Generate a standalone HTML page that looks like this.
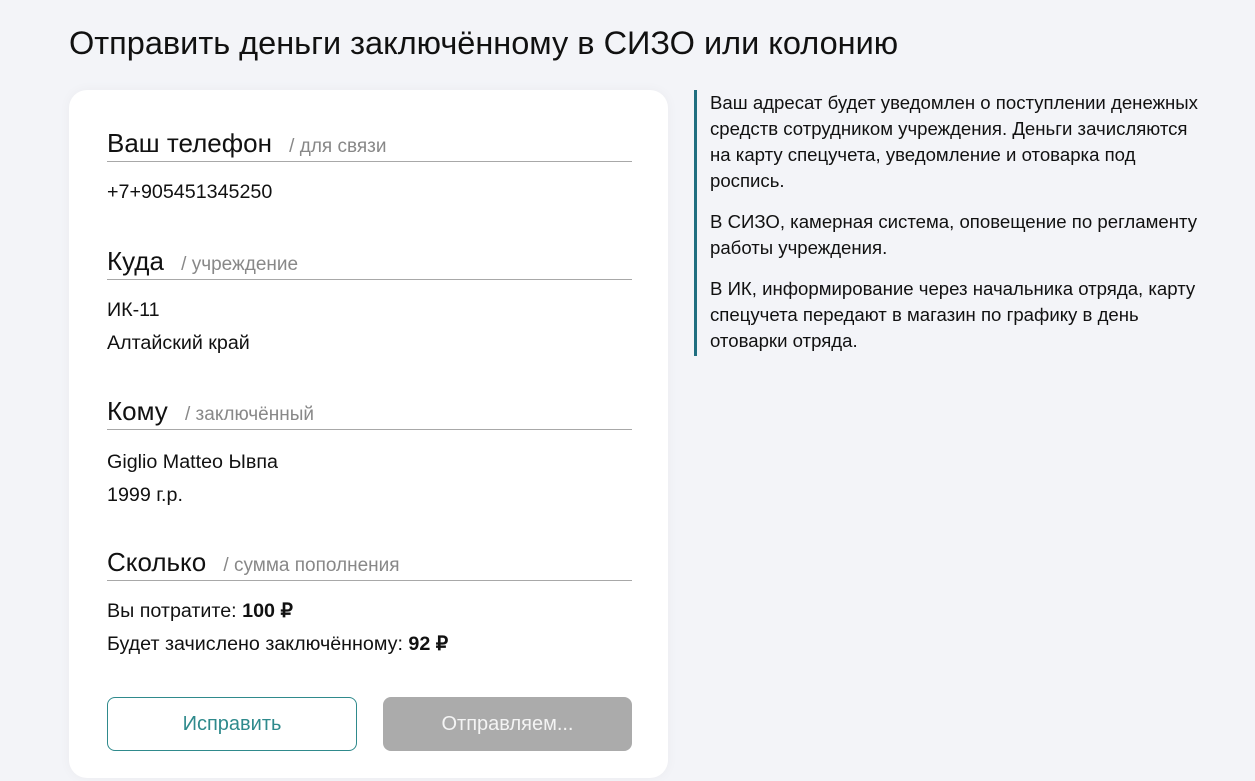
<!DOCTYPE html>
<html><head><meta charset="utf-8"><style>
*{margin:0;padding:0;box-sizing:border-box}
body{width:1255px;height:781px;background:#f3f4f8;font-family:"Liberation Sans",sans-serif;color:#111;position:relative;overflow:hidden}
h1{position:absolute;left:69px;top:25px;font-size:32.5px;font-weight:400;color:#111}
.card{position:absolute;left:69px;top:90px;width:599px;height:688px;background:#fff;border-radius:18px;box-shadow:0 0 12px rgba(0,0,0,.04)}
.h{position:absolute;left:38px;width:525px;border-bottom:1px solid #a8a8a8;height:34px;font-size:26px;line-height:30px;white-space:nowrap}
.h span{font-size:19px;color:#888;margin-left:10px}
.v{position:absolute;left:38px;font-size:19.7px;line-height:33px}
.btn{position:absolute;top:607px;height:54px;width:250px;border-radius:8px;font-size:20px;display:flex;align-items:center;justify-content:center}
.b1{left:38px;border:1px solid #2f8a8c;color:#2f8a8c}
.b2{left:314px;background:#ababab;color:#f4f4f4;width:249px}
.side{position:absolute;left:694px;top:90px;width:512px;border-left:3px solid #1f6e80;padding-left:13px;font-size:18.6px;line-height:26px;color:#111;height:266px}
.side p{margin-bottom:15px}
</style></head><body>
<h1>Отправить деньги заключённому в СИЗО или колонию</h1>
<div class="card">
<div class="h" style="top:38px">Ваш телефон <span>/ для связи</span></div>
<div class="v" style="top:86px">+7+905451345250</div>
<div class="h" style="top:156px">Куда <span>/ учреждение</span></div>
<div class="v" style="top:204px">ИК-11<br>Алтайский край</div>
<div class="h" style="top:306px">Кому <span>/ заключённый</span></div>
<div class="v" style="top:356px">Giglio Matteo Ывпа<br>1999 г.р.</div>
<div class="h" style="top:457px">Сколько <span>/ сумма пополнения</span></div>
<div class="v" style="top:505px">Вы потратите: <b>100 ₽</b><br>Будет зачислено заключённому: <b>92 ₽</b></div>
<div class="btn b1">Исправить</div>
<div class="btn b2">Отправляем...</div>
</div>
<div class="side">
<p>Ваш адресат будет уведомлен о поступлении денежных средств сотрудником учреждения. Деньги зачисляются на карту спецучета, уведомление и отоварка под роспись.</p>
<p>В СИЗО, камерная система, оповещение по регламенту работы учреждения.</p>
<p>В ИК, информирование через начальника отряда, карту спецучета передают в магазин по графику в день отоварки отряда.</p>
</div>
</body></html>
